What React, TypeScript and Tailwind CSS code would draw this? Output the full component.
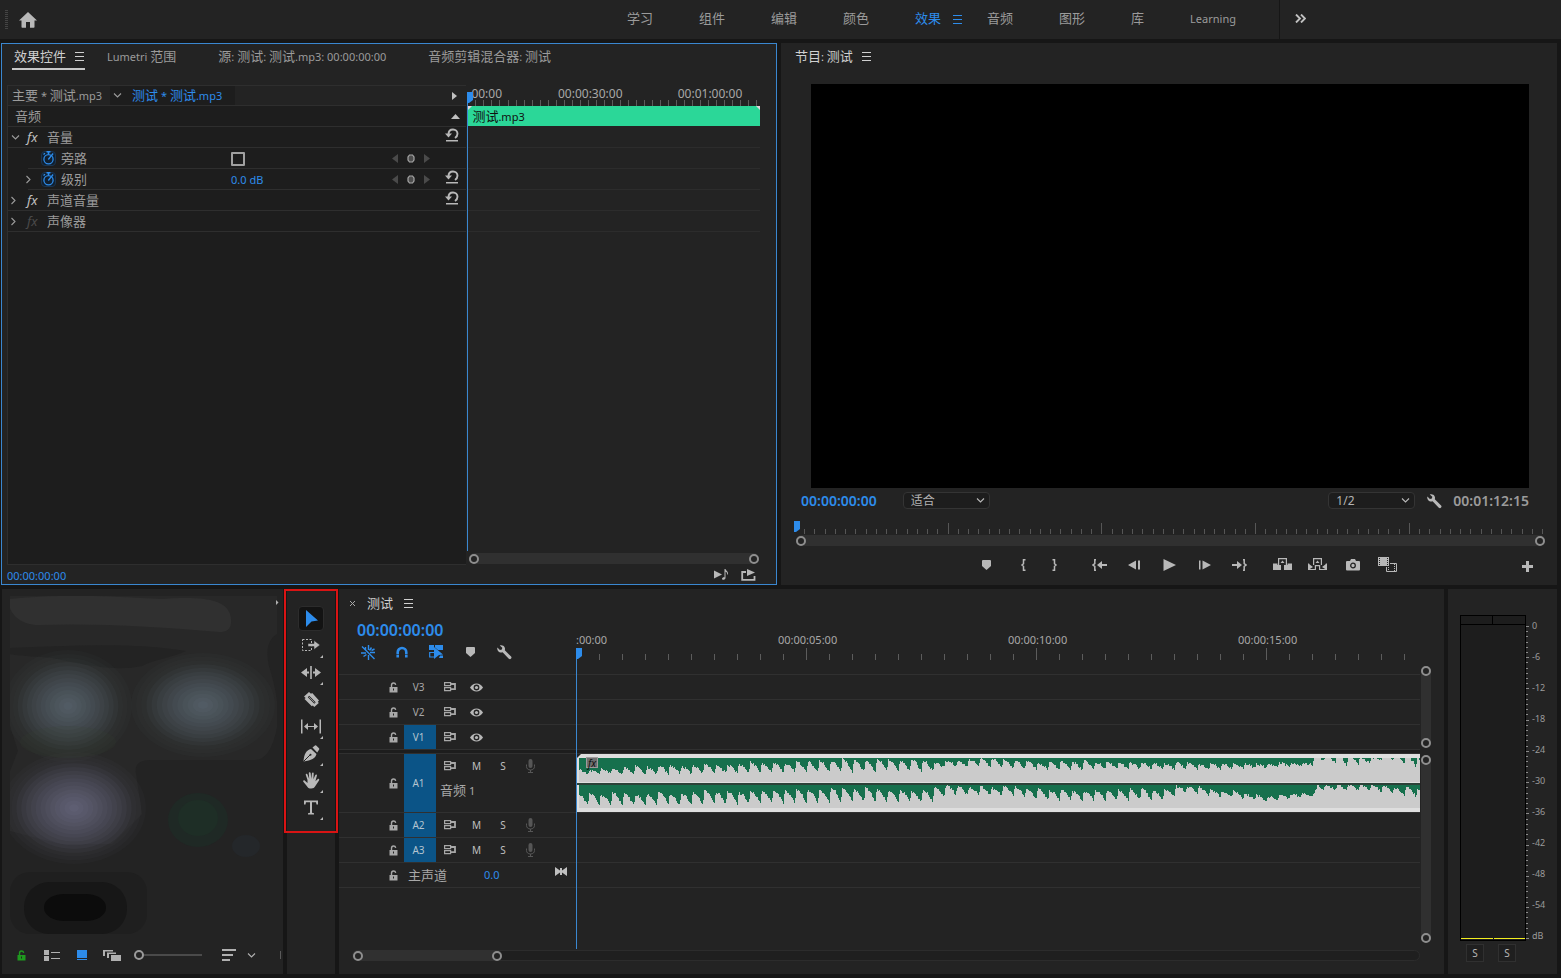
import { useState } from "react";
import type { ReactNode } from "react";

const workspaces = ["学习", "组件", "编辑", "颜色", "效果", "音频", "图形", "库", "Learning"];

const videoTracks = ["V3", "V2", "V1"];

const meterLabels = ["0", "-6", "-12", "-18", "-24", "-30", "-36", "-42", "-48", "-54", "dB"];

// Latin text is set a size smaller than the Chinese text beside it
function Label({ text, className = "" }: { text: string; className?: string }) {
  return (
    <span className={`block whitespace-nowrap text-[11px] leading-[18px] ${className}`}>
      {text.split(/([\u4e00-\u9fff]+)/).map((part, i) =>
        i % 2 === 1 ? (
          <span key={i} className="text-[13px]">
            {part}
          </span>
        ) : (
          part
        )
      )}
    </span>
  );
}

function Icon({ w, h, children, className = "" }: { w: number; h: number; children: ReactNode; className?: string }) {
  return (
    <svg width={w} height={h} viewBox={`0 0 ${w} ${h}`} fill="currentColor" className={`shrink-0 ${className}`} aria-hidden="true">
      {children}
    </svg>
  );
}

function MenuIcon() {
  return (
    <Icon w={9} h={9}>
      <path d="M0 0h9v1H0zM0 4h9v1H0zM0 8h9v1H0z" />
    </Icon>
  );
}

function ChevronRight() {
  return (
    <Icon w={5} h={9}>
      <path d="M.5 1l3.500 3.500L.5 8" fill="none" stroke="currentColor" strokeWidth="1.100" />
    </Icon>
  );
}

function ChevronDown({ className = "" }: { className?: string }) {
  return (
    <Icon w={9} h={5} className={className}>
      <path d="M1 .5L4.500 4 8 .5" fill="none" stroke="currentColor" strokeWidth="1.100" />
    </Icon>
  );
}

function ResetIcon() {
  return (
    <Icon w={14} h={14}>
      <path d="M3.500 6.500C3.500 3.400 5.300 1.500 8 1.500c2.600 0 4.500 1.900 4.500 4.300 0 1.900-1 3.200-2.500 4.200" fill="none" stroke="currentColor" strokeWidth="1.900" />
      <path d="M0 5.500h7l-3.500 4zM1 12h12v1.400H1z" />
    </Icon>
  );
}

function StopwatchIcon() {
  return (
    <span className="flex h-[15px] w-[15px] shrink-0 items-center justify-center rounded-sm border border-[#1b3550] bg-[#111f2e] text-[#2d8ceb]">
      <Icon w={13} h={14}>
        <circle cx="6.500" cy="8.200" r="4.600" fill="none" stroke="currentColor" strokeWidth="1.300" />
        <path d="M4.500 0h4v1.500h-1.200V3H5.700V1.500H4.500z" />
        <path d="M6.300 8.500l4.800-6" stroke="currentColor" strokeWidth="1.300" />
        <path d="M1.500 3.500l1.500-1.300" stroke="currentColor" strokeWidth="1.300" />
      </Icon>
    </span>
  );
}

function WrenchIcon() {
  return (
    <Icon w={15} h={15}>
      <path d="M2.800.500C4.800-.200 7 .700 7.700 2.500c.400 1 .400 1.900.100 2.700l6.300 6.300c1.300 1.600-.700 3.500-2.300 2.200L5.600 7.300C3.700 8 1.500 7.100.600 5.200.200 4.300.100 3.400.400 2.500l2.500 2.400 2-.400.400-1.800z" />
    </Icon>
  );
}

function MarkerIcon() {
  return (
    <Icon w={9} h={10}>
      <path d="M0 1q0-1 1-1h7q1 0 1 1v5L4.500 10 0 6z" />
    </Icon>
  );
}

function Playhead() {
  return (
    <Icon w={6} h={12} className="text-[#2d8ceb]">
      <path d="M0 0h6v8l-4 3H0z" />
    </Icon>
  );
}

function LockIcon() {
  return (
    <Icon w={9} h={11}>
      <path d="M.5 5h8v5.500h-8z" />
      <path d="M2.500 5V3.300C2.500 1.800 3.300 1 4.500 1c1.200 0 2 .600 2.200 1.800" fill="none" stroke="currentColor" strokeWidth="1.400" />
      <path d="M4 6.500h1v2H4z" fill="#232323" />
    </Icon>
  );
}

function SyncIcon() {
  return (
    <Icon w={12} h={10}>
      <path d="M.6.600h6v3h-6zM.6 5.600h6v3h-6z" fill="none" stroke="currentColor" strokeWidth="1.200" />
      <path d="M6 2h5v5.200H6" fill="none" stroke="currentColor" strokeWidth="1.800" />
    </Icon>
  );
}

function EyeIcon() {
  return (
    <Icon w={13} h={9}>
      <path d="M0 4.500C1.700 1.700 3.900.500 6.500.500s4.800 1.200 6.500 4c-1.700 2.800-3.900 4-6.500 4S1.700 7.300 0 4.500z" />
      <circle cx="6.500" cy="4.500" r="2.900" fill="#232323" />
      <circle cx="6.500" cy="4.500" r="1.600" />
    </Icon>
  );
}

function MicIcon() {
  return (
    <Icon w={9} h={14} className="text-[#565656]">
      <rect x="2.500" y="0" width="4" height="9" rx="2" />
      <path d="M.5 5.500v2C.500 9.500 2 11 4.500 11s4-1.500 4-3.500v-2M4.500 11v2M2 13.500h5" fill="none" stroke="currentColor" />
    </Icon>
  );
}

function IconButton({ label, className = "", children }: { label: string; className?: string; children: ReactNode }) {
  return (
    <button type="button" aria-label={label} className={`flex shrink-0 items-center justify-center ${className}`}>
      {children}
    </button>
  );
}

function Knob() {
  return <span className="h-[10px] w-[10px] shrink-0 rounded-full border-2 border-[#8e8e8e] bg-[#232323]" />;
}

function ZoomBar({ className = "", vertical = false }: { className?: string; vertical?: boolean }) {
  return (
    <div className={`flex items-center justify-between rounded-full bg-[#303030] ${vertical ? "w-[10px] flex-col" : "h-[11px]"} ${className}`}>
      <Knob />
      <Knob />
    </div>
  );
}

/* ---------- top bar ---------- */

function TopBar() {
  const [active, setActive] = useState("效果");

  return (
    <header className="flex h-[39px] shrink-0 items-center bg-[#232323] text-[#9b9b9b]">
      <div className="ml-[5px] flex flex-col gap-px">
        {Array.from({ length: 10 }, (_, i) => (
          <span key={i} className="h-px w-[3px] bg-[#444444]" />
        ))}
      </div>
      <IconButton label="主页" className="ml-[11px] text-[#b8b8b8]">
        <Icon w={18} h={16}>
          <path d="M9 0l9 8.500h-2.500V15a.8.800 0 0 1-.8.800H11V10H7v5.800H3.300a.8.800 0 0 1-.8-.8V8.500H0z" />
        </Icon>
      </IconButton>
      <nav className="ml-auto mr-[43px] flex h-[37px] items-center gap-[46px] self-start">
        {workspaces.map((name) => (
          <button
            key={name}
            type="button"
            onClick={() => setActive(name)}
            className={`relative block ${name === active ? "text-[#2d8ceb]" : ""}`}
          >
            <Label text={name} />
            {name === active && (
              <span className="absolute left-full top-[6px] ml-3">
                <MenuIcon />
              </span>
            )}
          </button>
        ))}
      </nav>
      <div className="flex h-full w-[282px] items-center border-l border-[#161616] pl-[15px]">
        <IconButton label="更多工作区" className="mb-[3px] text-[#c0c0c0]">
          <Icon w={11} h={9}>
            <path d="M1 .500l4 4-4 4M6 .500l4 4-4 4" fill="none" stroke="currentColor" strokeWidth="1.900" />
          </Icon>
        </IconButton>
      </div>
    </header>
  );
}

/* ---------- effect controls ---------- */

function KeyframeNav() {
  return (
    <div className="flex w-[42px] items-center justify-between px-[2px] text-[#4a4a4a]">
      <IconButton label="上一关键帧">
        <Icon w={6} h={9}>
          <path d="M6 0v9L0 4.500z" />
        </Icon>
      </IconButton>
      <IconButton label="添加关键帧" className="text-[#a8a8a8]">
        <Icon w={8} h={9}>
          <path d="M2.500 1h3l1.500 2v3l-1.500 2h-3L1 6V3z" fill="#4c4c4c" stroke="currentColor" strokeWidth="1.200" />
        </Icon>
      </IconButton>
      <IconButton label="下一关键帧">
        <Icon w={6} h={9}>
          <path d="M0 0v9l6-4.500z" />
        </Icon>
      </IconButton>
    </div>
  );
}

function EffectRow({ label, open = false, dim = false, reset = false }: { label: string; open?: boolean; dim?: boolean; reset?: boolean }) {
  return (
    <div className="flex h-[21px] items-center border-b border-[#2e2e2e]">
      <IconButton label={label} className={open ? "w-[14px]" : "w-[11px] mr-[3px]"}>
        {open ? <ChevronDown /> : <ChevronRight />}
      </IconButton>
      <span className={`ml-[5px] mt-px w-5 text-[13px] italic leading-none ${dim ? "text-[#4a4a4a]" : "text-[#c0c0c0]"}`}>fx</span>
      <Label text={label} className="mt-px" />
      {reset && (
        <IconButton label="重置" className="mb-1 ml-auto w-7 text-[#b8b8b8]">
          <ResetIcon />
        </IconButton>
      )}
    </div>
  );
}

function EffectControls() {
  return (
    <section className="flex min-w-0 flex-col border border-[#3a87d0] bg-[#232323] text-[#9b9b9b]">
      <div className="flex h-[41px] shrink-0 items-start pl-[10px] pt-px">
        <button type="button" className="flex h-[25px] items-center gap-[9px] border-b-2 border-[#c8c8c8] px-[2px] pr-px text-[#d0d0d0]">
          <Label text="效果控件" />
          <MenuIcon />
        </button>
        <button type="button" className="ml-[22px] flex h-[23px] items-center">
          <Label text="Lumetri 范围" />
        </button>
        <button type="button" className="ml-[42px] flex h-[23px] items-center">
          <Label text="源: 测试: 测试.mp3: 00:00:00:00" />
        </button>
        <button type="button" className="ml-[42px] flex h-[23px] items-center">
          <Label text="音频剪辑混合器: 测试" />
        </button>
      </div>

      <div className="flex min-h-0 flex-1 pl-[5px] pr-4">
        {/* effect list */}
        <div className="min-w-0 flex-[459_1_0%] border-b border-l border-t border-[#2e2e2e] bg-[#1d1d1d]">
          <div className="flex h-5 items-center border-b border-[#2e2e2e] bg-[#232323] pl-1">
            <Label text="主要 * 测试.mp3" />
            <div className="ml-2 flex h-full items-center bg-[#1d1d1d] pl-[3px] pr-[13px] text-[#2d8ceb]">
              <ChevronDown className="mr-[10px] text-[#9b9b9b]" />
              <Label text="测试 * 测试.mp3" />
            </div>
            <IconButton label="显示时间轴" className="ml-auto mr-[9px] text-[#c0c0c0]">
              <Icon w={5} h={8}>
                <path d="M0 0l5 4-5 4z" />
              </Icon>
            </IconButton>
          </div>
          <div className="flex h-[21px] items-center border-b border-[#2e2e2e] pl-[7px]">
            <Label text="音频" className="mt-px" />
            <IconButton label="折叠" className="ml-auto mr-[6px] text-[#c0c0c0]">
              <Icon w={9} h={5}>
                <path d="M4.500 0L9 5H0z" />
              </Icon>
            </IconButton>
          </div>
          <EffectRow label="音量" open reset />
          <div className="ml-5 flex h-[21px] items-center border-b border-[#2e2e2e] pl-[13px]">
            <StopwatchIcon />
            <label htmlFor="bypass" className="ml-[5px] w-[170px]">
              <Label text="旁路" />
            </label>
            <input id="bypass" type="checkbox" className="mt-[2px] h-[14px] w-[14px] appearance-none rounded-[1px] border-2 border-[#a0a0a0] checked:bg-[#2d8ceb]" />
            <div className="ml-auto mr-[34px]">
              <KeyframeNav />
            </div>
          </div>
          <div className="ml-5 flex h-[21px] items-center border-b border-[#2e2e2e]">
            <IconButton label="级别" className="-ml-2 mr-[5px] w-4">
              <ChevronRight />
            </IconButton>
            <StopwatchIcon />
            <Label text="级别" className="ml-[5px] w-[170px]" />
            <button type="button" className="mt-[2px] text-[11px] text-[#2d8ceb]">
              0.0 dB
            </button>
            <div className="ml-auto mr-[6px]">
              <KeyframeNav />
            </div>
            <IconButton label="重置" className="mb-1 w-7 text-[#b8b8b8]">
              <ResetIcon />
            </IconButton>
          </div>
          <EffectRow label="声道音量" reset />
          <EffectRow label="声像器" dim />
        </div>

        {/* keyframe timeline */}
        <div className="relative flex min-w-0 flex-[294_1_0%] flex-col">
          <div className="ml-[2px] flex h-[21px] shrink-0 flex-col justify-between">
            <div className="flex pl-[3px] text-xs leading-[18px] text-[#a8a8a8]">
              <span className="w-[30%]">00:00</span>
              <span className="w-[41.500%]">00:00:30:00</span>
              <span>00:01:00:00</span>
            </div>
            <div className="-mt-[3px] flex justify-between pl-[7px] pr-[2px]">
              {Array.from({ length: 36 }, (_, i) => (
                <span key={i} className="h-[6px] w-px bg-[#5c5c5c]" />
              ))}
            </div>
          </div>
          <div className="relative ml-[2px] flex h-5 shrink-0 items-center bg-[#2bd798] pl-1 text-[#101010]">
            <Label text="测试.mp3" className="mt-px" />
            <Icon w={4} h={4} className="absolute left-0 top-0 text-[#e4d5dc]">
              <path d="M0 0h4L0 4z" />
            </Icon>
            <Icon w={4} h={4} className="absolute right-0 top-0 text-[#e4d5dc]">
              <path d="M0 0h4v4z" />
            </Icon>
          </div>
          <div className="h-px shrink-0" />
          {Array.from({ length: 5 }, (_, i) => (
            <div key={i} className="ml-[2px] h-[21px] shrink-0 border-b border-[#2c2c2c]" />
          ))}
          <ZoomBar className="mb-px ml-[3px] mr-px mt-auto" />
          <div className="absolute bottom-[14px] left-px top-[18px] w-px bg-[#3a87d0]" />
          <div className="absolute left-px top-[7px]">
            <Playhead />
          </div>
        </div>
      </div>

      <div className="flex h-[19px] shrink-0 items-center pl-[5px] pr-5">
        <span className="mt-[3px] text-[11px] leading-4 text-[#2d8ceb]">00:00:00:00</span>
        <IconButton label="仅播放音频" className="ml-auto text-[#b8b8b8]">
          <Icon w={15} h={11}>
            <path d="M0 1.500l8 4-8 4zM10.500 0l1 0c.300 1.800 3 2 2.500 5.500h-.800c.200-1.500-.500-2.300-1.700-2.700V9c0 2-3.500 2.500-3.500.800 0-1.300 1.500-1.800 2.500-1.500z" />
          </Icon>
        </IconButton>
        <IconButton label="导出" className="ml-3 text-[#b8b8b8]">
          <Icon w={15} h={12}>
            <path d="M5 3H1.200v7.800h12.300V7" fill="none" stroke="currentColor" strokeWidth="1.800" />
            <path d="M6 0l8 3.500L6 7z" />
          </Icon>
        </IconButton>
      </div>
    </section>
  );
}

/* ---------- program monitor ---------- */

function Dropdown({ label, options }: { label: string; options: string[] }) {
  return (
    <div className="relative mb-px">
      <select aria-label={label} className="block h-[17px] w-[87px] appearance-none rounded-sm border border-[#343434] bg-[#1d1d1d] pl-[7px] text-xs leading-[15px] text-[#b4b4b4]">
        {options.map((o) => (
          <option key={o}>{o}</option>
        ))}
      </select>
      <ChevronDown className="pointer-events-none absolute right-[5px] top-[6px]" />
    </div>
  );
}

function ProgramMonitor() {
  return (
    <section className="flex min-w-0 flex-col bg-[#232323] text-[#b8b8b8]">
      <div className="flex h-[41px] shrink-0 items-start pl-[14px] pt-[2px]">
        <button type="button" className="flex h-[23px] items-center gap-[9px] text-[#d0d0d0]">
          <Label text="节目: 测试" />
          <MenuIcon />
        </button>
      </div>
      <div className="ml-[30px] mr-7 min-h-0 flex-1 bg-black" />
      <div className="flex h-[26px] shrink-0 items-center pl-5 pr-7">
        <span className="text-sm font-semibold text-[#2d8ceb]">00:00:00:00</span>
        <div className="ml-[26px] mr-auto">
          <Dropdown label="缩放级别" options={["适合", "50%", "100%"]} />
        </div>
        <Dropdown label="回放分辨率" options={["1/2", "完整", "1/4"]} />
        <IconButton label="设置" className="ml-3 mr-[11px]">
          <WrenchIcon />
        </IconButton>
        <span className="text-sm font-semibold text-[#9b9b9b]">00:01:12:15</span>
      </div>
      <div className="relative flex h-[21px] shrink-0 items-end justify-between pb-px pl-[23px] pr-[13px]">
        {Array.from({ length: 73 }, (_, i) => (
          <span key={i} className={`w-px bg-[#565656] ${i % 15 === 14 ? "h-[11px]" : "h-[5px]"}`} />
        ))}
        <div className="absolute left-[13px] top-[7px]">
          <Playhead />
        </div>
      </div>
      <ZoomBar className="ml-[15px] mr-3 shrink-0" />
      <div className="flex h-[39px] shrink-0 items-center pb-[2px]">
        <div className="flex-1 pl-[57px]" />
        <IconButton label="添加标记" className="w-10">
          <MarkerIcon />
        </IconButton>
        <IconButton label="标记入点" className="w-[34px]">
          <Icon w={6} h={12}>
            <path d="M5.500.700h-2v4L2 6l1.500 1.300v4h2" fill="none" stroke="currentColor" strokeWidth="1.500" />
          </Icon>
        </IconButton>
        <IconButton label="标记出点" className="mr-3 w-[30px]">
          <Icon w={6} h={12}>
            <path d="M.5.700h2v4L4 6 2.500 7.300v4h-2" fill="none" stroke="currentColor" strokeWidth="1.500" />
          </Icon>
        </IconButton>
        <IconButton label="转到入点" className="w-[35px]">
          <Icon w={15} h={12}>
            <path d="M4 .700H2.800v4L1 6l1.800 1.300v4H4" fill="none" stroke="currentColor" strokeWidth="1.500" />
            <path d="M5 6l5-4v3h5v2h-5v3z" />
          </Icon>
        </IconButton>
        <IconButton label="后退一帧" className="w-[35px]">
          <Icon w={13} h={10}>
            <path d="M8 .500v9L0 5zM10 .500h2v9h-2z" />
          </Icon>
        </IconButton>
        <IconButton label="播放" className="w-[35px]">
          <Icon w={13} h={12}>
            <path d="M.500 0L13 6 .500 12z" />
          </Icon>
        </IconButton>
        <IconButton label="前进一帧" className="w-[35px]">
          <Icon w={13} h={10}>
            <path d="M1 .500h1.500v9H1zM4.500.500v9L13 5z" />
          </Icon>
        </IconButton>
        <IconButton label="转到出点" className="mr-2 w-[35px]">
          <Icon w={15} h={12}>
            <path d="M11 .700h1.200v4L14 6l-1.800 1.300v4H11" fill="none" stroke="currentColor" strokeWidth="1.500" />
            <path d="M10 6L5 2v3H0v2h5v3z" />
          </Icon>
        </IconButton>
        <IconButton label="提升" className="w-[35px]">
          <Icon w={19} h={13}>
            <path d="M5.600 7V.600h7.800V7" fill="none" stroke="currentColor" strokeWidth="1.200" />
            <path d="M0 5.500h4.500V7H8v5H0zM14.500 5.500H19V12h-8V7h3.500zM9.500 2.500l2 2.500h-4z" />
          </Icon>
        </IconButton>
        <IconButton label="提取" className="w-[35px]">
          <Icon w={19} h={13}>
            <path d="M5.600 7V.600h7.800V7M.600 5.500v6h6.800V7.600h4.200v3.900h6.800v-6" fill="none" stroke="currentColor" strokeWidth="1.200" />
            <path d="M9.500 2.500l2 2.500h-4zM1 6l4 3-4 2.500zM18 6l-4 3 4 2.500z" />
          </Icon>
        </IconButton>
        <IconButton label="导出帧" className="w-[35px]">
          <Icon w={14} h={12}>
            <path d="M0 3q0-1 1-1h3l1-2h4l1 2h3q1 0 1 1v7.500q0 1-1 1H1q-1 0-1-1z" />
            <circle cx="7" cy="6.500" r="2.300" fill="none" stroke="#232323" strokeWidth="1.300" />
          </Icon>
        </IconButton>
        <IconButton label="比较视图" className="w-[35px]">
          <Icon w={19} h={15}>
            <path d="M0 0h11v9H0z" />
            <path d="M1.500 1v8M9.500 1v8" stroke="#232323" strokeDasharray="1 1" />
            <path d="M12 6.500h6.500v8H8.500V10" fill="none" stroke="currentColor" />
            <path d="M10.500 10v4M16.500 7v7" stroke="currentColor" strokeDasharray="1 1" />
          </Icon>
        </IconButton>
        <div className="flex flex-1 justify-end pr-6">
          <IconButton label="按钮编辑器" className="mt-1">
            <Icon w={11} h={11}>
              <path d="M4 0h3v4h4v3H7v4H4V7H0V4h4z" />
            </Icon>
          </IconButton>
        </div>
      </div>
    </section>
  );
}

/* ---------- project panel ---------- */

const glows = [
  { cx: 58, cy: 110, rx: 64, ry: 56, color: "#8f9ab8", steps: 14 },
  { cx: 193, cy: 109, rx: 72, ry: 52, color: "#8f9ab8", steps: 14 },
  { cx: 64, cy: 212, rx: 72, ry: 56, color: "#a39dc0", steps: 15 },
];

function ProjectPanel() {
  return (
    <section className="flex w-[281px] shrink-0 flex-col bg-[#232323] text-[#b0b0b0]">
      <div className="relative min-h-0 flex-1 overflow-hidden pl-2 pr-[6px] pt-[7px]">
        <svg viewBox="0 0 267 338" className="block h-[338px] w-full" preserveAspectRatio="none">
          <path d="M0 0h267v38c-10 6-11 18-8 32 8 26 12 50 6 70-4 14-10 24-20 24H140c-10 0-16 4-14 14l6 40-30 30H50L0 235v-60l8-20L0 130V60z" fill="#282828" />
          <path d="M0 52c60-2 120-6 176 3-12 6-30 8-44 15-30 6-60-2-90-8-20-2-34-2-42-4z" fill="#232323" />
          <path d="M0 3c60-6 110-2 150 0 30-2 70-4 71 20 1 10-4 13-12 13-60-5-120-9-180-7C10 29 2 18 0 12z" fill="#303030" />
          {glows.map((g) =>
            Array.from({ length: g.steps }, (_, i) => (
              <ellipse
                key={`${g.cx}-${i}`}
                cx={g.cx}
                cy={g.cy}
                rx={g.rx * (1 - i / g.steps)}
                ry={g.ry * (1 - i / g.steps)}
                fill={g.color}
                fillOpacity={i < 3 ? 0.025 : 0.05}
              />
            ))
          )}
          <ellipse cx="58" cy="146" rx="48" ry="16" fill="#34402c" fillOpacity=".15" />
          <ellipse cx="188" cy="224" rx="30" ry="27" fill="#1f2925" />
          <ellipse cx="188" cy="222" rx="20" ry="18" fill="#1e2e26" />
          <ellipse cx="236" cy="250" rx="14" ry="11" fill="#24272a" />
          <rect x="0" y="276" width="137" height="62" rx="20" fill="#1f1f1f" />
          <rect x="14" y="286" width="103" height="52" rx="25" fill="#171717" />
          <rect x="34" y="298" width="62" height="27" rx="20" ry="13" fill="#0c0c0c" />
        </svg>
        <Icon w={3} h={5} className="absolute right-[4px] top-[11px]">
          <path d="M0 0l2.500 2.500L0 5z" />
        </Icon>
      </div>
      <div className="flex h-[38px] shrink-0 items-center pl-[15px]">
        <IconButton label="可写" className="text-[#1f9a1f]">
          <LockIcon />
        </IconButton>
        <IconButton label="列表视图" className="ml-[18px]">
          <Icon w={16} h={11}>
            <path d="M0 0h5v5H0zM0 6h5v5H0zM7 2h9v1H7zM7 8h9v1H7z" />
          </Icon>
        </IconButton>
        <IconButton label="图标视图" className="ml-[17px] text-[#2d8ceb]">
          <Icon w={10} h={10}>
            <path d="M0 0h10v8H0zM0 9h10v1H0z" />
          </Icon>
        </IconButton>
        <IconButton label="自由变换视图" className="ml-4">
          <Icon w={18} h={11}>
            <path d="M0 0h10v1.500H2V6H0zM4 2.500h9V4H6v4H4zM8 5h10v6H8z" />
          </Icon>
        </IconButton>
        <input
          type="range"
          aria-label="缩览图大小"
          defaultValue={0}
          className="ml-[13px] h-[10px] w-[68px] appearance-none bg-[linear-gradient(#4a4a4a,#4a4a4a)] bg-[length:100%_2px] bg-center bg-no-repeat [&::-webkit-slider-thumb]:h-[10px] [&::-webkit-slider-thumb]:w-[10px] [&::-webkit-slider-thumb]:appearance-none [&::-webkit-slider-thumb]:rounded-full [&::-webkit-slider-thumb]:border-2 [&::-webkit-slider-thumb]:border-[#9a9a9a] [&::-webkit-slider-thumb]:bg-[#232323]"
        />
        <IconButton label="排序图标" className="ml-5">
          <Icon w={14} h={12}>
            <path d="M0 0h14v2H0zM0 5h11v2H0zM0 10h8v2H0z" />
          </Icon>
        </IconButton>
        <ChevronDown className="ml-[11px]" />
        <span className="ml-auto mr-[2px] h-2 w-px bg-[#5a5a5a]" />
      </div>
    </section>
  );
}

/* ---------- tools ---------- */

const tools: { label: string; corner: boolean; icon: ReactNode }[] = [
  { label: "选择工具", corner: false, icon: <path d="M5 1l12 10.500-6.500 1L5 18z" /> },
  {
    label: "向前选择轨道工具",
    corner: true,
    icon: (
      <>
        <path d="M1.500 3.500h9v11h-9z" fill="none" stroke="currentColor" strokeDasharray="2 1.500" />
        <path d="M7 7.500h6V4.500l6 4.500-6 4.500v-3H7z" stroke="#232323" strokeWidth=".5" />
      </>
    ),
  },
  {
    label: "波纹编辑工具",
    corner: true,
    icon: <path d="M9.200 3h1.600v13H9.200zM0 9.500L6 5v3.500h2v2H6V14zM20 9.500L14 5v3.500h-2v2h2V14z" />,
  },
  {
    label: "剃刀工具",
    corner: false,
    icon: (
      <>
        <path d="M8 2l2 1.800 1.200-.800L18 10.500l-1.200 1.200 1 1.300-4.500 4-1.500-1.500-1 .800L3.500 9l1.200-1L3 6.500z" />
        <path d="M7.500 6.500l6.500 6.500" stroke="#232323" strokeWidth="2" />
        <path d="M8 7l5.500 5.500" stroke="currentColor" strokeWidth=".7" />
      </>
    ),
  },
  {
    label: "外滑工具",
    corner: true,
    icon: <path d="M0 2.500h1.500v14H0zM18.500 2.500H20v14h-1.500zM3 9.500L7 6v3h6V6l4 3.500-4 3.500v-3H7v3z" />,
  },
  {
    label: "钢笔工具",
    corner: true,
    icon: (
      <>
        <path d="M10 5l5.500 5c-1.200 4.500-5 6.500-13 7.500C3.200 10 5 6.200 10 5zM11.500 3.500L14 1.500q.8-.500 1.500.200l2.500 2.600q.700.800 0 1.500L16.200 8.500z" />
        <path d="M2.500 17.500L9 11" stroke="#232323" />
        <circle cx="9.500" cy="10.800" r="1" fill="#232323" />
      </>
    ),
  },
  {
    label: "手形工具",
    corner: true,
    icon: (
      <path d="M6.500 9L4.800 4c-.400-1.300 1.200-1.800 1.700-.600L8.200 8l-.400-5.700c0-1.300 1.700-1.400 1.900-.100L10.300 8l.600-5.600c.200-1.200 1.900-1.100 1.800.200L12.400 8.300l1.800-4.100c.500-1.200 2.100-.600 1.700.600l-1.500 5.500 2.200-2.100c1-.900 2.200.200 1.400 1.200l-4 6.200c-.600 1.200-1.700 1.900-3.700 1.900-2.500 0-3.700-.900-4.500-2.600L2.300 10.800c-.600-1.100.800-2 1.600-1.100L6.500 12z" />
    ),
  },
  {
    label: "文字工具",
    corner: true,
    icon: <path d="M3 2.500h14v4h-1.500L15 4.200h-4v10.600l2 .500v1.200H7v-1.200l2-.500V4.200H5L4.500 6.500H3z" />,
  },
];

function Tools() {
  const [tool, setTool] = useState("选择工具");

  return (
    <section className="relative flex w-12 shrink-0 flex-col items-center bg-[#232323] pt-4">
      {tools.map((t) => (
        <button
          key={t.label}
          type="button"
          aria-label={t.label}
          onClick={() => setTool(t.label)}
          className={`relative my-px flex h-[25px] w-[26px] items-center justify-center rounded-sm border ${
            tool === t.label ? "border-[#2c2c2c] bg-[#131313] text-[#2d8ceb]" : "border-transparent text-[#b8b8b8]"
          }`}
        >
          <Icon w={20} h={19}>
            {t.icon}
          </Icon>
          {t.corner && (
            <Icon w={3} h={3} className="absolute -bottom-px right-0">
              <path d="M3 0v3H0z" />
            </Icon>
          )}
        </button>
      ))}
      <div className="pointer-events-none absolute -left-[3px] top-0 h-[244px] w-[54px] border-2 border-[#d91414]" />
    </section>
  );
}

/* ---------- timeline ---------- */

// [x, peak, valley]: depth of the green area below the channel's top edge
const upperEnvelope = [
  [0, 12, 17],
  [60, 8, 16],
  [190, 5, 14],
  [270, 2, 14],
  [360, 3, 13],
  [368, 2, 8],
  [430, 1, 10],
  [470, 3, 12],
  [560, 3, 11],
  [660, 6, 11],
  [735, 4, 7],
  [738, -3, 2],
  [765, -3, 7],
  [790, 0, 6],
  [812, -4, 1],
  [843, 1, 9],
];

const lowerEnvelope = [
  [0, 8, 20],
  [60, 7, 20],
  [190, 6, 18],
  [270, 4, 17],
  [355, 5, 16],
  [370, 1, 9],
  [430, 1, 10],
  [470, 4, 15],
  [590, 3, 15],
  [604, 1, 7],
  [640, 4, 11],
  [690, 10, 16],
  [737, 8, 11],
  [740, 0, 4],
  [800, 0, 6],
  [843, 3, 12],
];

function random(n: number) {
  return Math.abs(Math.sin(n * 12.9898) * 43758.5453) % 1;
}

function wavePath(envelope: number[][], top: number, seed: number) {
  let d = `M2 ${top}`;
  for (let x = 2; x < 843; x++) {
    let k = 0;
    while (k < envelope.length - 2 && envelope[k + 1][0] <= x) k++;
    const [x0, p0, v0] = envelope[k];
    const [x1, p1, v1] = envelope[k + 1];
    const t = (x - x0) / (x1 - x0);
    const peak = p0 + (p1 - p0) * t;
    const valley = v0 + (v1 - v0) * t;
    // each beat rises quickly, holds for a moment and then fades out
    const position = (x + 1) / 11.5;
    const phase = position % 1;
    const beat = phase < 0.12 ? phase / 0.12 : phase < 0.5 ? 1 - (phase - 0.12) * 0.6 : 0.77 - (phase - 0.5) * 1.6;
    const strength = 0.75 + random(Math.floor(position) + seed) * 0.4;
    const noise = random(x + seed * 31) - 0.5;
    const depth = Math.max(0, Math.round(valley - (valley - peak) * Math.max(0, beat) * strength + noise * 2.5));
    d += `V${top + depth}h1`;
  }
  return `${d}V${top}z`;
}

function AudioClip() {
  return (
    <div className="relative ml-px h-full flex-1 bg-[#cbcbcb]">
      <svg viewBox="0 0 843 58" preserveAspectRatio="none" className="block h-full w-full">
        <path d={wavePath(upperEnvelope, 4, 1)} fill="#16704d" />
        <path d={wavePath(lowerEnvelope, 31, 5)} fill="#16704d" />
        <path d="M0 0h843v4H0zM0 28h843v1H0zM0 54h843v4H0zM0 0h2v58H0z" fill="#dedede" />
        <path d="M0 30h843" stroke="#2b4238" strokeWidth="2" />
        <path d="M0 0h4L0 4z" fill="#232323" />
      </svg>
      <span className="absolute left-[9px] top-[3px] flex h-[11px] w-[12px] items-center justify-center border border-[#a09a9c] bg-[#6f6f6f] text-[10px] italic leading-none text-[#101010]">
        fx
      </span>
    </div>
  );
}

function TrackTarget({ name, on }: { name: string; on: boolean }) {
  return (
    <button type="button" className={`flex h-full w-8 items-center justify-center pr-[3px] text-[10px] ${on ? "bg-[#0b5487] text-[#b4c4d0]" : ""}`}>
      {name}
    </button>
  );
}

function AudioButtons() {
  return (
    <>
      <IconButton label="同步锁定" className="w-7">
        <SyncIcon />
      </IconButton>
      <button type="button" className="w-[25px] text-[10px] text-[#c0c0c0]">
        M
      </button>
      <button type="button" className="w-7 text-[10px] text-[#c0c0c0]">
        S
      </button>
      <IconButton label="画外音录制" className="w-[26px]">
        <MicIcon />
      </IconButton>
    </>
  );
}

function Timeline() {
  return (
    <section className="flex min-w-0 flex-1 flex-col bg-[#232323] text-[#a8a8a8]">
      <div className="flex h-7 shrink-0 items-center pl-[11px]">
        <IconButton label="关闭" className="mt-px">
          <Icon w={5} h={5}>
            <path d="M0 0l5 5M5 0L0 5" stroke="currentColor" />
          </Icon>
        </IconButton>
        <button type="button" className="ml-3 flex items-center gap-[11px] text-[#d0d0d0]">
          <Label text="测试" />
          <MenuIcon />
        </button>
      </div>

      <div className="flex min-h-0 flex-1">
        <div className="relative min-w-0 flex-1">
          <div className="flex h-[57px]">
            <div className="w-[237px] shrink-0 pl-[18px]">
              <div className="text-base font-semibold leading-[26px] text-[#2d8ceb]">00:00:00:00</div>
              <div className="-ml-[6px] flex h-[18px] text-[#2d8ceb]">
                <IconButton label="嵌套序列" className="w-[34px]">
                  <Icon w={15} h={15}>
                    <path d="M1 1.500L13.500 14M7.500 0v5M4.500 2v3M10.500 2.500l-2 3M0 8h5M9 7.500h5M2.500 11.500l3-2M7.500 10v5M10.500 5.500l3-1.500" fill="none" stroke="currentColor" strokeWidth="1.400" />
                  </Icon>
                </IconButton>
                <IconButton label="对齐" className="w-[34px]">
                  <Icon w={12} h={12}>
                    <path d="M1.700 11.500V6.300a4.300 4.300 0 0 1 8.600 0v5.200" fill="none" stroke="currentColor" strokeWidth="2.600" />
                    <path d="M0 8.500h4M8 8.500h4" stroke="#232323" strokeWidth=".6" />
                  </Icon>
                </IconButton>
                <IconButton label="链接选择项" className="w-[34px]">
                  <Icon w={15} h={14}>
                    <path d="M0 0h5v5H0zM6 0h8v5H9L6 2.500z" />
                    <path d="M5 7.500H.700V12H5" fill="none" stroke="currentColor" strokeWidth="1.200" />
                    <path d="M5 2l9 7.500-4 .500-5 4zM11 10.500h3V13h-4z" />
                  </Icon>
                </IconButton>
                <IconButton label="添加标记" className="w-[34px] text-[#b8b8b8]">
                  <MarkerIcon />
                </IconButton>
                <IconButton label="时间轴设置" className="w-[34px] text-[#b8b8b8]">
                  <WrenchIcon />
                </IconButton>
              </div>
            </div>
            {/* time ruler, one tick every 23px */}
            <div className="relative min-w-0 flex-1 overflow-hidden">
              <div className="flex pt-[14px] text-[11px] leading-[18px]">
                <span className="w-[202px] shrink-0">:00:00</span>
                <span className="w-[230px] shrink-0">00:00:05:00</span>
                <span className="w-[230px] shrink-0">00:00:10:00</span>
                <span>00:00:15:00</span>
              </div>
              <div className="-mt-px flex h-[12px] items-end">
                {Array.from({ length: 37 }, (_, i) => (
                  <span key={i} className="w-[23px] shrink-0">
                    <span className={`block w-px bg-[#5c5c5c] ${i % 10 === 0 ? "h-[12px]" : "h-[6px]"}`} />
                  </span>
                ))}
              </div>
            </div>
          </div>

          <div className="border-t border-[#303030]">
            {videoTracks.map((name) => (
              <div key={name} className="flex h-[25px] items-center border-b border-[#303030] pl-[50px]">
                <IconButton label="切换轨道锁定" className="mr-[6px]">
                  <LockIcon />
                </IconButton>
                <TrackTarget name={name} on={name === "V1"} />
                <IconButton label="同步锁定" className="w-7">
                  <SyncIcon />
                </IconButton>
                <IconButton label="切换轨道输出" className="w-[25px] text-[#b8b8b8]">
                  <EyeIcon />
                </IconButton>
              </div>
            ))}
            <div className="h-[3px] bg-[#1d1d1d]" />
            <div className="flex h-[60px] border-b border-t border-[#303030]">
              <div className="flex w-[237px] shrink-0 items-center pl-[50px]">
                <IconButton label="切换轨道锁定" className="mr-[6px]">
                  <LockIcon />
                </IconButton>
                <TrackTarget name="A1" on />
                <div className="self-start">
                  <div className="flex h-6 items-center">
                    <AudioButtons />
                  </div>
                  <Label text="音频 1" className="mt-[3px] pl-1" />
                </div>
              </div>
              <AudioClip />
            </div>
            {["A2", "A3"].map((name) => (
              <div key={name} className="flex h-[25px] items-center border-b border-[#303030] pl-[50px]">
                <IconButton label="切换轨道锁定" className="mr-[6px]">
                  <LockIcon />
                </IconButton>
                <TrackTarget name={name} on />
                <AudioButtons />
              </div>
            ))}
            <div className="flex h-[25px] items-center border-b border-[#303030] pl-[50px]">
              <IconButton label="切换轨道锁定" className="mr-[10px]">
                <LockIcon />
              </IconButton>
              <Label text="主声道" className="w-[76px]" />
              <button type="button" className="w-[71px] text-left text-[11px] text-[#2d8ceb]">
                0.0
              </button>
              <IconButton label="折叠轨道" className="mb-2 text-[#c0c0c0]">
                <Icon w={12} h={9}>
                  <path d="M0 0l5 3.500V1h2v2.500L12 0v9L7 5.500V8H5V5.500L0 9z" />
                </Icon>
              </IconButton>
            </div>
          </div>

          <div className="absolute bottom-0 left-[237px] top-[42px] w-px bg-[#3a87d0]" />
          <div className="absolute left-[237px] top-[31px]">
            <Playhead />
          </div>
        </div>

        <div className="flex w-6 shrink-0 flex-col pb-[6px] pl-px pt-[49px]">
          <ZoomBar vertical className="h-[82px]" />
          <ZoomBar vertical className="mt-[7px] flex-1" />
        </div>
      </div>

      <div className="h-[25px] shrink-0 pl-[13px] pr-6 pt-px">
        <div className="h-[11px] rounded-full border border-[#2c2c2c] bg-[#1f1f1f]">
          <ZoomBar className="-mt-px w-[14%]" />
        </div>
      </div>
    </section>
  );
}

/* ---------- audio meters ---------- */

function AudioMeters() {
  return (
    <section className="flex w-[109px] shrink-0 flex-col bg-[#232323] pl-3 pt-[26px] text-[#9b9b9b]">
      <div className="flex h-[326px]">
        <div className="flex w-[66px] flex-col border border-black bg-[#1d1d1d]">
          <div className="grid h-[9px] grid-cols-2 divide-x divide-black border-b border-black">
            <span />
            <span />
          </div>
          <div className="mb-px mt-auto flex h-px gap-px">
            <span className="flex-1 bg-[#f2ee20]" />
            <span className="flex-1 bg-[#f2ee20]" />
          </div>
        </div>
        <div className="flex flex-col justify-between pb-px pt-[11px]">
          {Array.from({ length: 61 }, (_, i) => (
            <span key={i} className={`h-px bg-[#8a8a8a] ${i % 6 === 0 ? "w-[3px]" : "w-[2px]"}`} />
          ))}
        </div>
        <div className="ml-[3px] flex flex-col justify-between pt-[6px] text-[9px] leading-[10px]">
          {meterLabels.map((m) => (
            <span key={m}>{m}</span>
          ))}
        </div>
      </div>
      <div className="mt-[3px] flex gap-[14px] pl-[6px]">
        <button type="button" aria-label="左声道独奏" className="h-[18px] w-[18px] border border-[#303030] bg-[#1f1f1f] text-[10px] leading-none text-[#b8b8b8]">
          S
        </button>
        <button type="button" aria-label="右声道独奏" className="h-[18px] w-[18px] border border-[#303030] bg-[#1f1f1f] text-[10px] leading-none text-[#b8b8b8]">
          S
        </button>
      </div>
    </section>
  );
}

export default function App() {
  return (
    <div className="flex h-screen flex-col overflow-hidden bg-[#161616] pb-1 font-['Noto_Sans','Noto_Sans_CJK_SC',sans-serif]">
      <TopBar />
      <main className="flex min-h-0 flex-1 flex-col gap-1 pr-1 pt-1">
        <div className="grid min-h-0 flex-[542_1_0%] grid-cols-2 grid-rows-1 gap-1 pl-px">
          <EffectControls />
          <ProgramMonitor />
        </div>
        <div className="flex min-h-0 flex-[385_1_0%] gap-1 pl-[2px]">
          <ProjectPanel />
          <Tools />
          <Timeline />
          <AudioMeters />
        </div>
      </main>
    </div>
  );
}
